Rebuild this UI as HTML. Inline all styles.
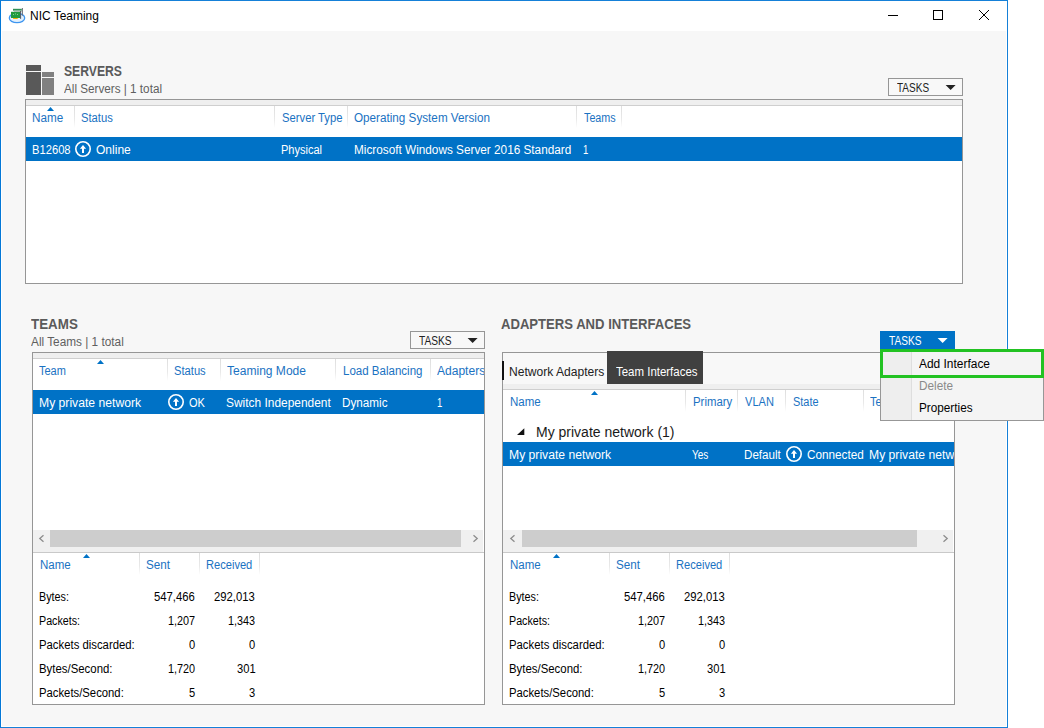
<!DOCTYPE html>
<html lang="en"><head><meta charset="utf-8"><title>NIC Teaming</title>
<style>
html,body{margin:0;padding:0;background:#fff;}
#root{position:relative;width:1044px;height:728px;overflow:hidden;background:#fff;font-family:"Liberation Sans",sans-serif;}
#root div,#root span,#root svg{position:absolute;box-sizing:border-box;}
.t{white-space:nowrap;transform-origin:0 0;display:block;}
.clip{overflow:hidden;}
.win{left:0;top:0;width:1008px;height:728px;border:1px solid #1580d8;border-left-color:#0478d7;background:#fff;}
.content{left:2px;top:31px;width:1004px;height:695px;background:#f7f7f7;}
.titlebar{left:1px;top:1px;width:1006px;height:30px;background:#fff;}
.box{border:1px solid #969696;background:#fff;}
.strip{background:#efefef;border-bottom:1px solid #cfcfcf;}
.sel{background:#0072c6;}
.sep{width:1px;background:linear-gradient(#dedede,#e9e9e9 60%,#fff);}
.tasks{border:1px solid #969696;background:#f8f8f8;}
.track{background:#f0f0f0;}
.thumb{background:#cdcdcd;}

</style></head><body>
<div id="root">
<div class="win"></div>
<div class="content"></div>
<!-- title icon -->
<svg style="left:8px;top:6px" width="20" height="20" viewBox="0 0 20 20">
  <ellipse cx="9" cy="12" rx="7.7" ry="4.7" fill="#e2f0fd" stroke="#3f96f0" stroke-width="1.3"/>
  <rect x="5" y="2.8" width="8.8" height="1.9" fill="#2e8f55"/><rect x="6" y="4.7" width="7.8" height="1.1" fill="#b9c3bd"/>
  <rect x="13.9" y="2" width="1" height="7.6" fill="#6b6f7a"/>
  <rect x="3" y="5.8" width="9.2" height="6.2" fill="#1f9a3d"/>
  <rect x="12.1" y="5" width="1" height="7.8" fill="#4f5460"/>
  <rect x="5.1" y="12" width="4.6" height="1" fill="#f0b400"/>
  <rect x="5" y="8" width="1" height="1" fill="#7fd394"/><rect x="7" y="7.4" width="1" height="1" fill="#7fd394"/><rect x="9" y="8" width="1" height="1" fill="#7fd394"/>
</svg>
<!-- window controls -->
<svg style="left:880px;top:4px" width="120" height="24" viewBox="0 0 120 24">
  <path d="M8 11.5H18" stroke="#000" stroke-width="1" fill="none"/>
  <rect x="53.5" y="6.5" width="9" height="9" stroke="#000" stroke-width="1" fill="none"/>
  <path d="M99 6L109 16M109 6L99 16" stroke="#000" stroke-width="1" fill="none"/>
</svg>
<!-- servers icon -->
<div style="left:26px;top:65px;width:15px;height:6px;background:#595959"></div>
<div style="left:26px;top:72px;width:15px;height:23px;background:#595959"></div>
<div style="left:42px;top:72px;width:12px;height:5px;background:#808080"></div>
<div style="left:42px;top:78px;width:12px;height:17px;background:#808080"></div>
<!-- servers tasks -->
<div class="tasks" style="left:888px;top:78px;width:75px;height:18px"></div>
<svg style="left:945px;top:85px" width="12" height="6" viewBox="0 0 12 6"><path d="M0.6 0H10.6L5.6 5.1Z" fill="#222"/></svg>
<!-- servers table -->
<div class="box" style="left:25px;top:99px;width:938px;height:185px"></div>
<div class="strip" style="left:26px;top:100px;width:936px;height:6px"></div>
<svg style="left:47px;top:107px" width="7" height="4" viewBox="0 0 7 4"><path d="M0 4L3.5 0L7 4Z" fill="#0072c6"/></svg>
<div class="sep" style="left:74px;top:106px;height:22px"></div>
<div class="sep" style="left:274px;top:106px;height:22px"></div>
<div class="sep" style="left:347px;top:106px;height:22px"></div>
<div class="sep" style="left:576px;top:106px;height:22px"></div>
<div class="sep" style="left:621px;top:106px;height:22px"></div>
<div class="sel" style="left:26px;top:137px;width:936px;height:24px"></div>
<svg class="ok" style="left:75px;top:141px" width="16" height="16" viewBox="0 0 16 16"><circle cx="8" cy="8" r="7.2" fill="none" stroke="#fff" stroke-width="1.6"/><path d="M8 3.9L4.9 7.7H7V11.9H9V7.7H11.1Z" fill="#fff"/></svg>

<!-- teams -->
<div class="tasks" style="left:410px;top:331px;width:75px;height:18px"></div>
<svg style="left:467px;top:338px" width="12" height="6" viewBox="0 0 12 6"><path d="M0.6 0H10.6L5.6 5.1Z" fill="#222"/></svg>
<div class="box" style="left:32px;top:352px;width:453px;height:353px"></div>
<div class="strip" style="left:33px;top:353px;width:451px;height:6px"></div>
<svg style="left:97px;top:360px" width="7" height="4" viewBox="0 0 7 4"><path d="M0 4L3.5 0L7 4Z" fill="#0072c6"/></svg>
<div class="sep" style="left:167px;top:359px;height:22px"></div>
<div class="sep" style="left:220px;top:359px;height:22px"></div>
<div class="sep" style="left:335px;top:359px;height:22px"></div>
<div class="sep" style="left:430px;top:359px;height:22px"></div>
<div class="sel" style="left:33px;top:390px;width:451px;height:24px"></div>
<svg class="ok" style="left:168px;top:394px" width="16" height="16" viewBox="0 0 16 16"><circle cx="8" cy="8" r="7.2" fill="none" stroke="#fff" stroke-width="1.6"/><path d="M8 3.9L4.9 7.7H7V11.9H9V7.7H11.1Z" fill="#fff"/></svg>
<!-- teams scrollbar -->
<div class="track" style="left:33px;top:530px;width:450px;height:22px"></div>
<div class="thumb" style="left:50px;top:530px;width:411px;height:17px"></div>
<svg style="left:38px;top:534px" width="8" height="10" viewBox="0 0 8 10"><path d="M5.5 1.3L1.8 4.5L5.5 7.7" stroke="#8c8c8c" stroke-width="1.3" fill="none"/></svg>
<svg style="left:471px;top:534px" width="8" height="10" viewBox="0 0 8 10"><path d="M2.5 1.3L6.2 4.5L2.5 7.7" stroke="#8c8c8c" stroke-width="1.3" fill="none"/></svg>
<div style="left:33px;top:552px;width:451px;height:1px;background:#c9c9c9"></div>
<svg style="left:83px;top:554px" width="7" height="4" viewBox="0 0 7 4"><path d="M0 4L3.5 0L7 4Z" fill="#0072c6"/></svg>
<div class="sep" style="left:139px;top:553px;height:22px"></div>
<div class="sep" style="left:199px;top:553px;height:22px"></div>
<div class="sep" style="left:259px;top:553px;height:22px"></div>

<!-- adapters -->
<div class="box" style="left:502px;top:352px;width:453px;height:353px"></div>
<div style="left:503px;top:353px;width:451px;height:31px;background:#f8f8f8"></div>
<div class="strip" style="left:503px;top:384px;width:451px;height:6px"></div>
<div style="left:502px;top:361px;width:2px;height:19px;background:#111"></div>
<div style="left:607px;top:351px;width:96px;height:33px;background:#404040"></div>
<svg style="left:591px;top:391px" width="7" height="4" viewBox="0 0 7 4"><path d="M0 4L3.5 0L7 4Z" fill="#0072c6"/></svg>
<div class="sep" style="left:685px;top:390px;height:22px"></div>
<div class="sep" style="left:737px;top:390px;height:22px"></div>
<div class="sep" style="left:785px;top:390px;height:22px"></div>
<div class="sep" style="left:863px;top:390px;height:22px"></div>
<svg style="left:516px;top:428px" width="9" height="8" viewBox="0 0 9 8"><path d="M8.3 0.2V7H1Z" fill="#111"/></svg>
<div class="sel" style="left:503px;top:442px;width:451px;height:24px"></div>
<svg class="ok" style="left:786px;top:446px" width="16" height="16" viewBox="0 0 16 16"><circle cx="8" cy="8" r="7.2" fill="none" stroke="#fff" stroke-width="1.6"/><path d="M8 3.9L4.9 7.7H7V11.9H9V7.7H11.1Z" fill="#fff"/></svg>
<!-- adapters scrollbar -->
<div class="track" style="left:503px;top:530px;width:450px;height:22px"></div>
<div class="thumb" style="left:522px;top:530px;width:395px;height:17px"></div>
<svg style="left:509px;top:534px" width="8" height="10" viewBox="0 0 8 10"><path d="M5.5 1.3L1.8 4.5L5.5 7.7" stroke="#8c8c8c" stroke-width="1.3" fill="none"/></svg>
<svg style="left:941px;top:534px" width="8" height="10" viewBox="0 0 8 10"><path d="M2.5 1.3L6.2 4.5L2.5 7.7" stroke="#8c8c8c" stroke-width="1.3" fill="none"/></svg>
<div style="left:503px;top:552px;width:451px;height:1px;background:#c9c9c9"></div>
<svg style="left:553px;top:554px" width="7" height="4" viewBox="0 0 7 4"><path d="M0 4L3.5 0L7 4Z" fill="#0072c6"/></svg>
<div class="sep" style="left:609px;top:553px;height:22px"></div>
<div class="sep" style="left:669px;top:553px;height:22px"></div>
<div class="sep" style="left:729px;top:553px;height:22px"></div>

<!-- adapters TASKS (active) + menu -->
<div style="left:880px;top:331px;width:75px;height:18px;background:#0072c6"></div>
<svg style="left:937px;top:338px" width="12" height="6" viewBox="0 0 12 6"><path d="M0.6 0H10.6L5.6 5.1Z" fill="#fff"/></svg>
<div style="left:880px;top:349px;width:164px;height:72px;background:#f4f4f4;border:1px solid #979797"></div>
<div style="left:881px;top:350px;width:31px;height:70px;background:#eeeeee;border-right:1px solid #dedede"></div>
<div style="left:880px;top:349px;width:164px;height:29px;border:3px solid #22c222"></div>

<span class="t" id="t0" style="left:30.30px;top:9.00px;font-size:12px;line-height:15px;color:#000;transform:scaleX(0.9965);">NIC Teaming</span>
<span class="t" id="t1" style="left:64.10px;top:62.00px;font-size:14px;line-height:18px;color:#5a5a5a;font-weight:700;transform:scaleX(0.8699);">SERVERS</span>
<span class="t" id="t2" style="left:64.00px;top:82.00px;font-size:12px;line-height:15px;color:#5f5f5f;transform:scaleX(0.9751);">All Servers | 1 total</span>
<span class="t" id="t3" style="left:897.20px;top:81.00px;font-size:12px;line-height:15px;color:#222;transform:scaleX(0.8344);">TASKS</span>
<span class="t" id="t4" style="left:32.40px;top:111.00px;font-size:12px;line-height:15px;color:#1a72c2;transform:scaleX(0.9745);">Name</span>
<span class="t" id="t5" style="left:81.20px;top:111.00px;font-size:12px;line-height:15px;color:#1a72c2;transform:scaleX(0.9344);">Status</span>
<span class="t" id="t6" style="left:281.50px;top:111.00px;font-size:12px;line-height:15px;color:#1a72c2;transform:scaleX(0.9382);">Server Type</span>
<span class="t" id="t7" style="left:354.30px;top:111.00px;font-size:12px;line-height:15px;color:#1a72c2;transform:scaleX(0.9748);">Operating System Version</span>
<span class="t" id="t8" style="left:584.00px;top:111.00px;font-size:12px;line-height:15px;color:#1a72c2;transform:scaleX(0.8969);">Teams</span>
<span class="t" id="t9" style="left:31.70px;top:143.00px;font-size:12px;line-height:15px;color:#fff;transform:scaleX(0.9329);">B12608</span>
<span class="t" id="t10" style="left:96.20px;top:143.00px;font-size:12px;line-height:15px;color:#fff;transform:scaleX(1.0032);">Online</span>
<span class="t" id="t11" style="left:280.70px;top:143.00px;font-size:12px;line-height:15px;color:#fff;transform:scaleX(0.9175);">Physical</span>
<span class="t" id="t12" style="left:353.90px;top:143.00px;font-size:12px;line-height:15px;color:#fff;transform:scaleX(0.9813);">Microsoft Windows Server 2016 Standard</span>
<span class="t" id="t13" style="left:582.70px;top:143.00px;font-size:12px;line-height:15px;color:#fff;transform:scaleX(0.7925);">1</span>
<span class="t" id="t14" style="left:31.20px;top:315.00px;font-size:14px;line-height:18px;color:#5a5a5a;font-weight:700;transform:scaleX(0.9551);">TEAMS</span>
<span class="t" id="t15" style="left:31.20px;top:335.00px;font-size:12px;line-height:15px;color:#5f5f5f;transform:scaleX(0.9843);">All Teams | 1 total</span>
<span class="t" id="t16" style="left:419.00px;top:334.00px;font-size:12px;line-height:15px;color:#222;transform:scaleX(0.8474);">TASKS</span>
<span class="t" id="t17" style="left:39.40px;top:364.00px;font-size:12px;line-height:15px;color:#1a72c2;transform:scaleX(0.9167);">Team</span>
<span class="t" id="t18" style="left:174.30px;top:364.00px;font-size:12px;line-height:15px;color:#1a72c2;transform:scaleX(0.9315);">Status</span>
<span class="t" id="t19" style="left:227.00px;top:364.00px;font-size:12px;line-height:15px;color:#1a72c2;transform:scaleX(1.0036);">Teaming Mode</span>
<span class="t" id="t20" style="left:342.50px;top:364.00px;font-size:12px;line-height:15px;color:#1a72c2;transform:scaleX(0.9609);">Load Balancing</span>
<div class="clip" style="left:437px;top:364.00px;width:47px;height:15px;"><span class="t" id="t21" style="left:0.30px;top:0;font-size:12px;line-height:15px;color:#1a72c2;transform:scaleX(1.0035);">Adapters</span></div>
<span class="t" id="t22" style="left:38.50px;top:396.00px;font-size:12px;line-height:15px;color:#fff;transform:scaleX(1.0139);">My private network</span>
<span class="t" id="t23" style="left:189.30px;top:396.00px;font-size:12px;line-height:15px;color:#fff;transform:scaleX(0.9168);">OK</span>
<span class="t" id="t24" style="left:226.20px;top:396.00px;font-size:12px;line-height:15px;color:#fff;transform:scaleX(0.9941);">Switch Independent</span>
<span class="t" id="t25" style="left:341.50px;top:396.00px;font-size:12px;line-height:15px;color:#fff;transform:scaleX(0.9746);">Dynamic</span>
<span class="t" id="t26" style="left:437.30px;top:396.00px;font-size:12px;line-height:15px;color:#fff;transform:scaleX(0.7925);">1</span>
<span class="t" id="t27" style="left:39.60px;top:558.00px;font-size:12px;line-height:15px;color:#1a72c2;transform:scaleX(0.9589);">Name</span>
<span class="t" id="t28" style="left:146.00px;top:558.00px;font-size:12px;line-height:15px;color:#1a72c2;transform:scaleX(0.9722);">Sent</span>
<span class="t" id="t29" style="left:206.40px;top:558.00px;font-size:12px;line-height:15px;color:#1a72c2;transform:scaleX(0.9254);">Received</span>
<span class="t" id="t30" style="left:38.70px;top:590.00px;font-size:12px;line-height:15px;color:#000;transform:scaleX(0.8963);">Bytes:</span>
<span class="t" id="t31" style="left:154.40px;top:590.00px;font-size:12px;line-height:15px;color:#000;transform:scaleX(0.9426);">547,466</span>
<span class="t" id="t32" style="left:214.30px;top:590.00px;font-size:12px;line-height:15px;color:#000;transform:scaleX(0.9403);">292,013</span>
<span class="t" id="t33" style="left:38.70px;top:614.00px;font-size:12px;line-height:15px;color:#000;transform:scaleX(0.8929);">Packets:</span>
<span class="t" id="t34" style="left:168.20px;top:614.00px;font-size:12px;line-height:15px;color:#000;transform:scaleX(0.9024);">1,207</span>
<span class="t" id="t35" style="left:228.00px;top:614.00px;font-size:12px;line-height:15px;color:#000;transform:scaleX(0.9024);">1,343</span>
<span class="t" id="t36" style="left:38.70px;top:638.00px;font-size:12px;line-height:15px;color:#000;transform:scaleX(0.9439);">Packets discarded:</span>
<span class="t" id="t37" style="left:189.10px;top:638.00px;font-size:12px;line-height:15px;color:#000;transform:scaleX(0.9271);">0</span>
<span class="t" id="t38" style="left:248.90px;top:638.00px;font-size:12px;line-height:15px;color:#000;transform:scaleX(0.9271);">0</span>
<span class="t" id="t39" style="left:38.70px;top:662.00px;font-size:12px;line-height:15px;color:#000;transform:scaleX(0.9497);">Bytes/Second:</span>
<span class="t" id="t40" style="left:168.20px;top:662.00px;font-size:12px;line-height:15px;color:#000;transform:scaleX(0.9024);">1,720</span>
<span class="t" id="t41" style="left:236.50px;top:662.00px;font-size:12px;line-height:15px;color:#000;transform:scaleX(0.9285);">301</span>
<span class="t" id="t42" style="left:38.70px;top:686.00px;font-size:12px;line-height:15px;color:#000;transform:scaleX(0.9416);">Packets/Second:</span>
<span class="t" id="t43" style="left:189.10px;top:686.00px;font-size:12px;line-height:15px;color:#000;transform:scaleX(0.9271);">5</span>
<span class="t" id="t44" style="left:248.90px;top:686.00px;font-size:12px;line-height:15px;color:#000;transform:scaleX(0.9271);">3</span>
<span class="t" id="t45" style="left:509.60px;top:558.00px;font-size:12px;line-height:15px;color:#1a72c2;transform:scaleX(0.9589);">Name</span>
<span class="t" id="t46" style="left:616.00px;top:558.00px;font-size:12px;line-height:15px;color:#1a72c2;transform:scaleX(0.9722);">Sent</span>
<span class="t" id="t47" style="left:676.40px;top:558.00px;font-size:12px;line-height:15px;color:#1a72c2;transform:scaleX(0.9254);">Received</span>
<span class="t" id="t48" style="left:508.70px;top:590.00px;font-size:12px;line-height:15px;color:#000;transform:scaleX(0.8963);">Bytes:</span>
<span class="t" id="t49" style="left:624.40px;top:590.00px;font-size:12px;line-height:15px;color:#000;transform:scaleX(0.9426);">547,466</span>
<span class="t" id="t50" style="left:684.30px;top:590.00px;font-size:12px;line-height:15px;color:#000;transform:scaleX(0.9403);">292,013</span>
<span class="t" id="t51" style="left:508.70px;top:614.00px;font-size:12px;line-height:15px;color:#000;transform:scaleX(0.8929);">Packets:</span>
<span class="t" id="t52" style="left:638.20px;top:614.00px;font-size:12px;line-height:15px;color:#000;transform:scaleX(0.9024);">1,207</span>
<span class="t" id="t53" style="left:698.00px;top:614.00px;font-size:12px;line-height:15px;color:#000;transform:scaleX(0.9024);">1,343</span>
<span class="t" id="t54" style="left:508.70px;top:638.00px;font-size:12px;line-height:15px;color:#000;transform:scaleX(0.9439);">Packets discarded:</span>
<span class="t" id="t55" style="left:659.10px;top:638.00px;font-size:12px;line-height:15px;color:#000;transform:scaleX(0.9271);">0</span>
<span class="t" id="t56" style="left:718.90px;top:638.00px;font-size:12px;line-height:15px;color:#000;transform:scaleX(0.9271);">0</span>
<span class="t" id="t57" style="left:508.70px;top:662.00px;font-size:12px;line-height:15px;color:#000;transform:scaleX(0.9497);">Bytes/Second:</span>
<span class="t" id="t58" style="left:638.20px;top:662.00px;font-size:12px;line-height:15px;color:#000;transform:scaleX(0.9024);">1,720</span>
<span class="t" id="t59" style="left:706.50px;top:662.00px;font-size:12px;line-height:15px;color:#000;transform:scaleX(0.9285);">301</span>
<span class="t" id="t60" style="left:508.70px;top:686.00px;font-size:12px;line-height:15px;color:#000;transform:scaleX(0.9416);">Packets/Second:</span>
<span class="t" id="t61" style="left:659.10px;top:686.00px;font-size:12px;line-height:15px;color:#000;transform:scaleX(0.9271);">5</span>
<span class="t" id="t62" style="left:718.90px;top:686.00px;font-size:12px;line-height:15px;color:#000;transform:scaleX(0.9271);">3</span>
<span class="t" id="t63" style="left:501.20px;top:315.00px;font-size:14px;line-height:18px;color:#5a5a5a;font-weight:700;transform:scaleX(0.9352);">ADAPTERS AND INTERFACES</span>
<span class="t" id="t64" style="left:889.40px;top:334.00px;font-size:12px;line-height:15px;color:#fff;transform:scaleX(0.8422);">TASKS</span>
<span class="t" id="t65" style="left:508.70px;top:365.00px;font-size:12px;line-height:15px;color:#222;transform:scaleX(1.0061);">Network Adapters</span>
<span class="t" id="t66" style="left:615.50px;top:365.00px;font-size:12px;line-height:15px;color:#fff;transform:scaleX(0.9546);">Team Interfaces</span>
<span class="t" id="t67" style="left:510.00px;top:395.00px;font-size:12px;line-height:15px;color:#1a72c2;transform:scaleX(0.9589);">Name</span>
<span class="t" id="t68" style="left:692.50px;top:395.00px;font-size:12px;line-height:15px;color:#1a72c2;transform:scaleX(0.9481);">Primary</span>
<span class="t" id="t69" style="left:744.60px;top:395.00px;font-size:12px;line-height:15px;color:#1a72c2;transform:scaleX(0.9216);">VLAN</span>
<span class="t" id="t70" style="left:792.50px;top:395.00px;font-size:12px;line-height:15px;color:#1a72c2;transform:scaleX(0.9097);">State</span>
<div class="clip" style="left:869px;top:395.00px;width:11px;height:15px;"><span class="t" id="t71" style="left:1.00px;top:0;font-size:12px;line-height:15px;color:#1a72c2;transform:scaleX(0.9201);">Team</span></div>
<span class="t" id="t72" style="left:535.70px;top:423.00px;font-size:14px;line-height:18px;color:#1a1a1a;transform:scaleX(1.0001);">My private network (1)</span>
<span class="t" id="t73" style="left:508.50px;top:448.00px;font-size:12px;line-height:15px;color:#fff;transform:scaleX(1.0139);">My private network</span>
<span class="t" id="t74" style="left:691.50px;top:448.00px;font-size:12px;line-height:15px;color:#fff;transform:scaleX(0.8326);">Yes</span>
<span class="t" id="t75" style="left:743.80px;top:448.00px;font-size:12px;line-height:15px;color:#fff;transform:scaleX(0.9676);">Default</span>
<span class="t" id="t76" style="left:807.40px;top:448.00px;font-size:12px;line-height:15px;color:#fff;transform:scaleX(0.9785);">Connected</span>
<div class="clip" style="left:869px;top:448.00px;width:85px;height:15px;"><span class="t" id="t77" style="left:0.20px;top:0;font-size:12px;line-height:15px;color:#fff;transform:scaleX(1.0139);">My private network</span></div>
<span class="t" id="t78" style="left:919.00px;top:357.00px;font-size:12px;line-height:15px;color:#000;transform:scaleX(0.9945);">Add Interface</span>
<span class="t" id="t79" style="left:919.00px;top:379.00px;font-size:12px;line-height:15px;color:#8a8a8a;transform:scaleX(0.9802);">Delete</span>
<span class="t" id="t80" style="left:919.00px;top:401.00px;font-size:12px;line-height:15px;color:#000;transform:scaleX(0.9798);">Properties</span>
</div>
</body></html>
